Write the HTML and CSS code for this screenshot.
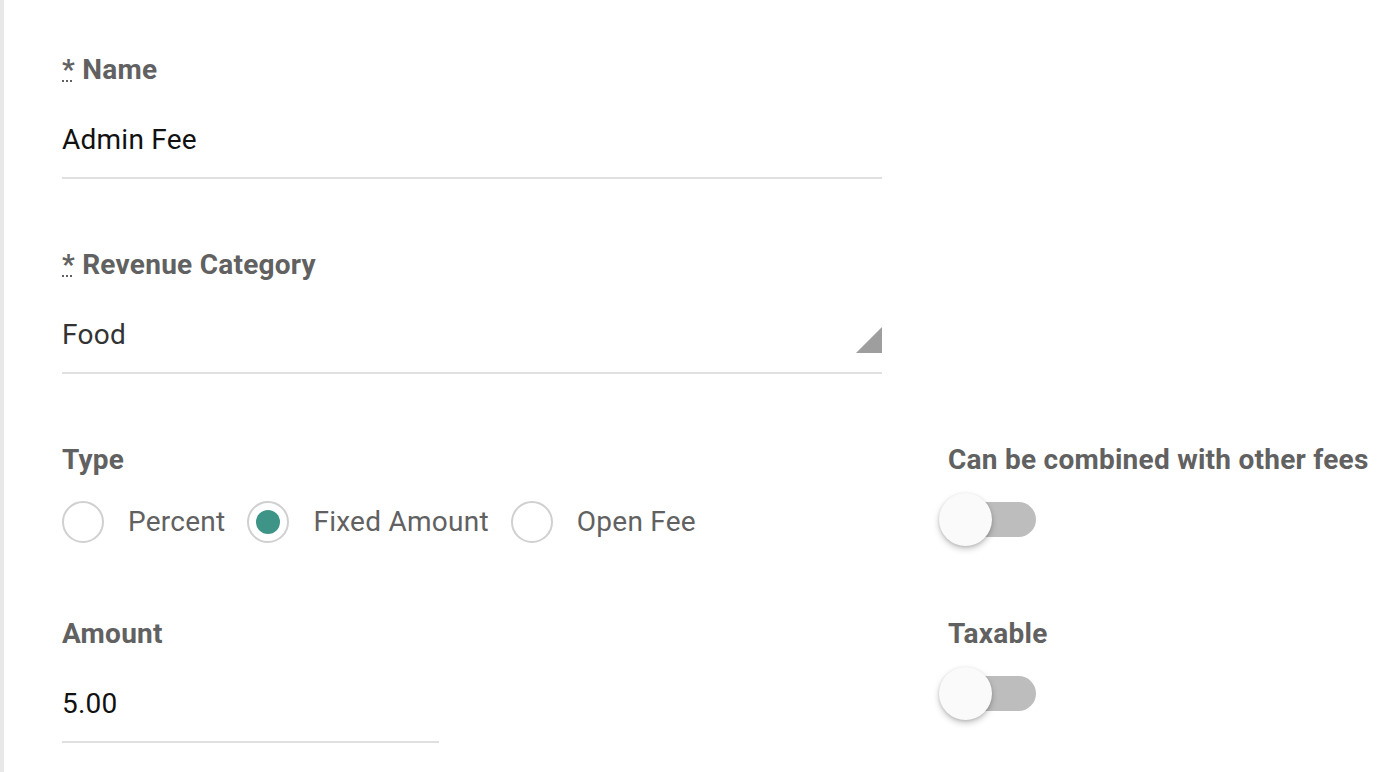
FILE: index.html
```html
<!DOCTYPE html>
<html lang="en">
  <head>
    <meta charset="UTF-8" />
    <meta name="viewport" content="width=device-width, initial-scale=1.0" />
    <title>Edit Fee</title>
    <link rel="stylesheet" href="styles.css">
  </head>
  <body>
    <form class="fee-form">
      <div class="field">
        <label class="field-label"><abbr title="required">*</abbr> Name</label>
        <div class="text-input">Admin Fee</div>
      </div>

      <div class="field">
        <label class="field-label"><abbr title="required">*</abbr> Revenue Category</label>
        <div class="text-input select-input">
          <span class="select-value">Food</span>
          <svg class="select-arrow" width="26" height="26" viewBox="0 0 26 26">
            <polygon points="26,0 26,26 0,26" fill="#9e9e9e" />
          </svg>
        </div>
      </div>

      <div class="row">
        <div class="field">
          <label class="field-label">Type</label>
          <div class="radio-group">
            <label class="radio"><span class="radio-circle"></span>Percent</label>
            <label class="radio"><span class="radio-circle checked"></span>Fixed Amount</label>
            <label class="radio"><span class="radio-circle"></span>Open Fee</label>
          </div>
        </div>
        <div class="field">
          <label class="field-label">Can be combined with other fees</label>
          <div class="switch">
            <span class="switch-track"></span>
            <span class="switch-thumb"></span>
          </div>
        </div>
      </div>

      <div class="row">
        <div class="field">
          <label class="field-label">Amount</label>
          <div class="text-input amount-input">5.00</div>
        </div>
        <div class="field">
          <label class="field-label">Taxable</label>
          <div class="switch">
            <span class="switch-track"></span>
            <span class="switch-thumb"></span>
          </div>
        </div>
      </div>
    </form>
  </body>
</html>
```

FILE: styles.css
```css
/* styles.css */
html,
body {
  height: 100%;
}

body {
  margin: 0;
  font-family: Roboto, "Liberation Sans", Arial, sans-serif;
  letter-spacing: 0.25px;
  background: #fff;
  border-left: 4px solid #e8e8e8;
  box-sizing: border-box;
}

.fee-form {
  padding: 54px 0 0 58px;
}

.field {
  margin-bottom: 70px;
}

.field-label {
  display: block;
  font-size: 28px;
  line-height: 32px;
  font-weight: 700;
  color: #616161;
  white-space: nowrap;
}

.field-label abbr {
  text-decoration: underline dotted;
  text-decoration-thickness: 2px;
}

.text-input {
  width: 820px;
  margin-top: 22px;
  padding: 16px 0 21px;
  font-size: 28px;
  line-height: 32px;
  color: #111;
  border-bottom: 2px solid #e0e0e0;
}

.select-input {
  display: flex;
  align-items: flex-end;
  color: #333;
}

.select-value {
  flex: 1;
}

.select-arrow {
  margin-bottom: -2px;
}

.amount-input {
  width: 377px;
}

.row {
  display: grid;
  grid-template-columns: 820px 1fr;
  column-gap: 66px;
}

.row .field {
  margin-bottom: 0;
}

.row + .row {
  margin-top: 72px;
}

.radio-group {
  display: flex;
  align-items: center;
  margin-top: 25px;
  height: 42px;
}

.radio {
  display: flex;
  align-items: center;
  margin-right: 22px;
  font-size: 28px;
  line-height: 32px;
  color: #616161;
}

.radio-circle {
  width: 42px;
  height: 42px;
  margin-right: 24px;
  border: 2px solid #d0d0d0;
  border-radius: 50%;
  box-sizing: border-box;
  display: flex;
  align-items: center;
  justify-content: center;
}

.radio-circle.checked::after {
  content: "";
  width: 24px;
  height: 24px;
  border-radius: 50%;
  background: #3e9587;
}

.switch {
  position: relative;
  width: 97px;
  height: 53px;
  margin: 17px 0 0 -9px;
}

.switch-track {
  position: absolute;
  left: 1px;
  top: 9px;
  width: 96px;
  height: 35px;
  border-radius: 18px;
  background: #bdbdbd;
}

.switch-thumb {
  position: absolute;
  left: 0;
  top: 0;
  width: 53px;
  height: 53px;
  border-radius: 50%;
  background: #fafafa;
  box-shadow: 0 3px 6px rgba(0, 0, 0, 0.22), 0 1px 3px rgba(0, 0, 0, 0.12);
}
```
